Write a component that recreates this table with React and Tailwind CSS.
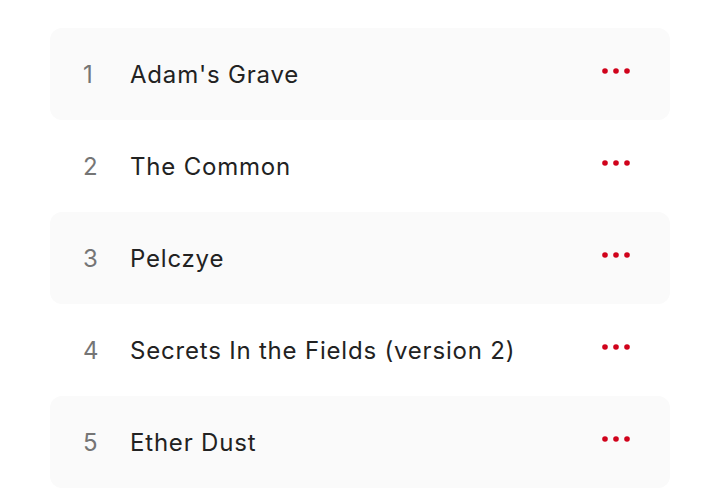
const tracks = [
  'Adam\'s Grave',
  'The Common',
  'Pelczye',
  'Secrets In the Fields (version 2)',
  'Ether Dust',
]

const MoreDots = () => (
  <svg width="30" height="6" viewBox="0 0 30 6" aria-hidden="true">
    <circle cx="3" cy="3" r="2.8" fill="#d0021b" />
    <circle cx="14" cy="3" r="2.8" fill="#d0021b" />
    <circle cx="25" cy="3" r="2.8" fill="#d0021b" />
  </svg>
)

export default function App() {
  return (
    <div
      className="min-h-[492px] w-[720px] bg-white pt-[28px] px-[50px]"
      style={{ fontFamily: 'Inter, "Noto Sans", sans-serif' }}
    >
      <ul className="flex flex-col">
        {tracks.map((title, i) => (
          <li
            key={title}
            className={`flex h-[92px] items-center rounded-[12px] pl-[33px] pr-[38px] ${
              i % 2 === 0 ? 'bg-[#fafafa]' : 'bg-white'
            }`}
          >
            <span className="mt-[2px] w-[47px] text-[24px] text-[#757575]">{i + 1}</span>
            <span className="mt-[2px] flex-1 text-[24px] tracking-[0.8px] text-[#222222]">
              {title}
            </span>
            <button className="-mt-[6px] flex items-center">
              <MoreDots />
            </button>
          </li>
        ))}
      </ul>
    </div>
  )
}
